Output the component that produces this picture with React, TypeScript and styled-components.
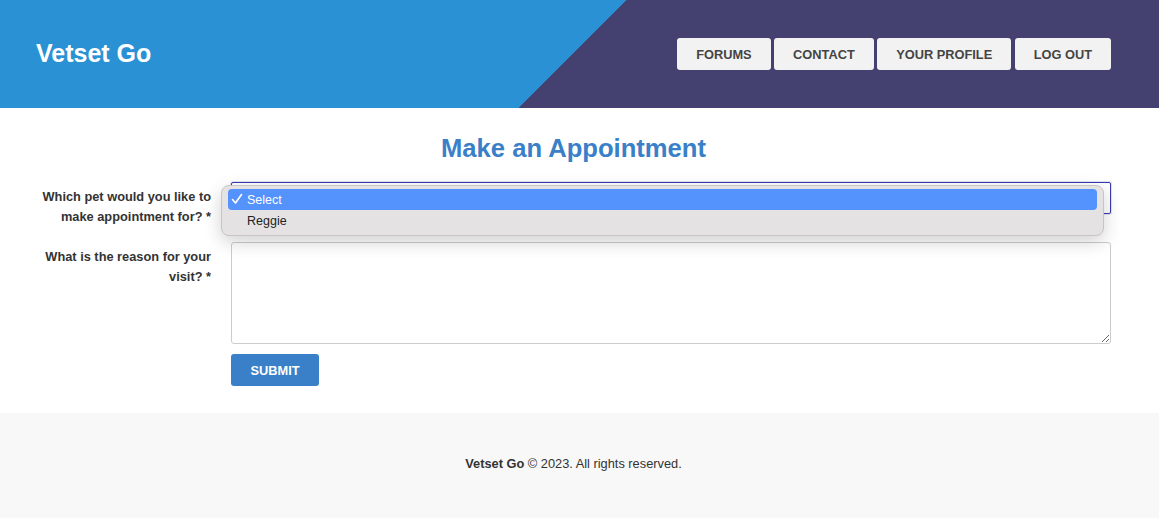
import React from "react";
import styled, { createGlobalStyle } from "styled-components";

const Global = createGlobalStyle`
  html, body { margin: 0; padding: 0; background: #fff; }
  body { font-family: "Liberation Sans", Arial, sans-serif; color: #333; }
  * { box-sizing: border-box; }
`;

const Header = styled.header`
  height: 108px;
  display: flex;
  align-items: center;
  justify-content: space-between;
  padding: 0 48px 0 36px;
  background: linear-gradient(135deg, #2991d4 443px, #444170 443px);
`;

const Logo = styled.div`
  color: #fff;
  font-weight: bold;
  font-size: 25px;
  margin-top: -2px;
`;

const Nav = styled.nav`
  display: flex;
  gap: 3.5px;
`;

const NavButton = styled.a`
  display: flex;
  align-items: center;
  height: 32px;
  padding: 0 19px;
  background: #f2f2f2;
  color: #444;
  font-size: 12.8px;
  font-weight: bold;
  border-radius: 3px;
  text-decoration: none;
`;

const Main = styled.main`
  padding: 26px 48px 27px 36px;
`;

const Title = styled.h2`
  margin: 0 0 20px;
  text-align: center;
  color: #3a80c8;
  font-size: 25.6px;
  line-height: 28px;
  font-weight: bold;
`;

const Row = styled.div`
  display: grid;
  grid-template-columns: 175px 1fr;
  column-gap: 20px;
  margin-bottom: 15px;
  &:last-child { margin-bottom: 0; }
`;

const Label = styled.label`
  text-align: right;
  font-size: 12.8px;
  font-weight: bold;
  line-height: 20px;
  color: #333;
  padding-top: 5px;
`;

const SelectWrap = styled.div`
  position: relative;
  height: 32px;
`;

const SelectBox = styled.div`
  height: 32px;
  border: 1px solid #3a3ab0;
  border-radius: 2px;
  background: #fff;
  box-shadow: 0 0 0 1px rgba(58, 58, 176, 0.15);
`;

const Menu = styled.div`
  position: absolute;
  left: -10px;
  right: 7px;
  top: 3px;
  height: 51px;
  padding: 3px 6px;
  background: #e4e2e3;
  border: 1px solid #c6c4c5;
  border-radius: 8px;
  box-shadow: 0 6px 18px rgba(0, 0, 0, 0.18);
  display: flex;
  flex-direction: column;
`;

const Option = styled.div<{ $active?: boolean }>`
  position: relative;
  height: 21px;
  display: flex;
  align-items: center;
  padding-left: 19px;
  border-radius: 4px;
  font-family: "Liberation Sans", Arial, sans-serif;
  font-size: 12.5px;
  color: ${(p) => (p.$active ? "#fff" : "#222")};
  background: ${(p) => (p.$active ? "#5492fd" : "transparent")};
`;

const Check = styled.span`
  position: absolute;
  left: 3px;
  top: 4px;
  display: flex;
`;

const TextArea = styled.textarea`
  display: block;
  width: 100%;
  height: 102px;
  border: 1px solid #ccc;
  border-radius: 3px;
  resize: vertical;
  font-family: inherit;
`;

const Submit = styled.button`
  height: 32px;
  padding: 0 19.5px;
  border: none;
  border-radius: 3px;
  background: #3a80c8;
  color: #fff;
  font-family: "Liberation Sans", Arial, sans-serif;
  font-size: 12.8px;
  font-weight: bold;
  margin-top: -5px;
`;

const Footer = styled.footer`
  height: 105px;
  padding: 0 48px 5px 36px;
  background: #f8f8f8;
  display: flex;
  align-items: center;
  justify-content: center;
  font-size: 12.8px;
  color: #333;
`;

export default function App() {
  return (
    <>
      <Global />
      <Header>
        <Logo>Vetset Go</Logo>
        <Nav>
          <NavButton>FORUMS</NavButton>
          <NavButton>CONTACT</NavButton>
          <NavButton>YOUR PROFILE</NavButton>
          <NavButton>LOG OUT</NavButton>
        </Nav>
      </Header>
      <Main>
        <Title>Make an Appointment</Title>
        <Row>
          <Label>Which pet would you like to make appointment for? *</Label>
          <SelectWrap>
            <SelectBox />
            <Menu>
              <Option $active>
                <Check>
                  <svg width="12" height="12" viewBox="0 0 12 12">
                    <path d="M1.5 6.5 L4.5 10 L10.5 1.5" fill="none" stroke="#fff" strokeWidth="1.6" strokeLinecap="round" strokeLinejoin="round" />
                  </svg>
                </Check>
                Select
              </Option>
              <Option>Reggie</Option>
            </Menu>
          </SelectWrap>
        </Row>
        <Row>
          <Label>What is the reason for your visit? *</Label>
          <TextArea />
        </Row>
        <Row>
          <span />
          <div>
            <Submit>SUBMIT</Submit>
          </div>
        </Row>
      </Main>
      <Footer>
        <span>
          <b>Vetset Go</b> © 2023. All rights reserved.
        </span>
      </Footer>
    </>
  );
}
